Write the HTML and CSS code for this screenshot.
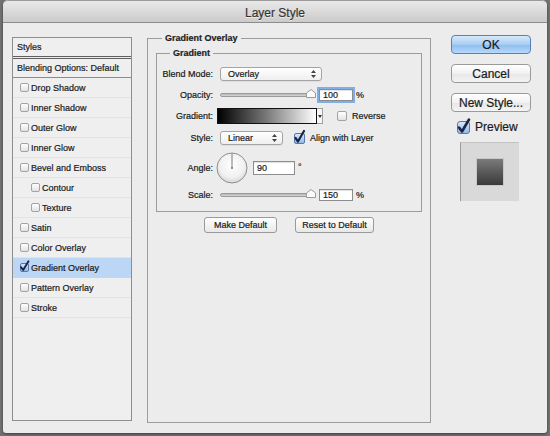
FILE: index.html
```html
<!DOCTYPE html>
<html>
<head>
<meta charset="utf-8">
<title>Layer Style</title>
<link rel="stylesheet" href="styles.css">
</head>
<body>
<div class="window">
  <div class="titlebar">Layer Style</div>
  <div class="content">
    <div class="styles-list">
      <div class="list-head">Styles</div>
      <div class="list-blend">Blending Options: Default</div>
      <div class="item"><span class="cb"></span>Drop Shadow</div>
      <div class="item"><span class="cb"></span>Inner Shadow</div>
      <div class="item"><span class="cb"></span>Outer Glow</div>
      <div class="item"><span class="cb"></span>Inner Glow</div>
      <div class="item"><span class="cb"></span>Bevel and Emboss</div>
      <div class="item sub"><span class="cb"></span>Contour</div>
      <div class="item sub"><span class="cb"></span>Texture</div>
      <div class="item"><span class="cb"></span>Satin</div>
      <div class="item"><span class="cb"></span>Color Overlay</div>
      <div class="item selected"><span class="cb on"><svg class="check" width="12" height="14" viewBox="0 0 12 14"><path d="M2 8.2 L4.2 11 L9.5 2.2" fill="none" stroke="#1c2547" stroke-width="1.9" stroke-linecap="round" stroke-linejoin="round"/></svg></span>Gradient Overlay</div>
      <div class="item"><span class="cb"></span>Pattern Overlay</div>
      <div class="item"><span class="cb"></span>Stroke</div>
    </div>

    <div class="middle">
      <fieldset class="group outer">
        <legend>Gradient Overlay</legend>
        <fieldset class="group inner">
          <legend>Gradient</legend>
          <div class="form">
            <span class="lbl">Blend Mode:</span>
            <div class="ctl">
              <div class="select blend"><span>Overlay</span><svg width="5" height="8" viewBox="0 0 5 8"><path d="M0 3 L2.5 0 L5 3 Z M0 5 L2.5 8 L5 5 Z" fill="#444"/></svg></div>
            </div>

            <span class="lbl">Opacity:</span>
            <div class="ctl">
              <div class="track"></div>
              <svg class="thumb" width="10" height="9" viewBox="0 0 10 9"><path d="M0.5 4 L5 0.5 L9.5 4 L9.5 8.5 L0.5 8.5 Z" fill="#fbfbfb" stroke="#9a9a9a"/></svg>
              <div class="num focus">100</div><span class="unit">%</span>
            </div>

            <span class="lbl">Gradient:</span>
            <div class="ctl">
              <div class="gradbar"></div>
              <div class="gradarrow"><svg width="4" height="3" viewBox="0 0 4 3"><path d="M0 0 L4 0 L2 3 Z" fill="#333"/></svg></div>
              <span class="cb mid rev"></span><span class="ctext">Reverse</span>
            </div>

            <span class="lbl">Style:</span>
            <div class="ctl">
              <div class="select style"><span>Linear</span><svg width="5" height="8" viewBox="0 0 5 8"><path d="M0 3 L2.5 0 L5 3 Z M0 5 L2.5 8 L5 5 Z" fill="#444"/></svg></div>
              <span class="cb big on align"><svg class="check" width="14" height="16" viewBox="0 0 14 16"><path d="M2.5 9 L5 12.5 L11 2" fill="none" stroke="#1c2547" stroke-width="2.2" stroke-linecap="round" stroke-linejoin="round"/></svg></span><span class="ctext">Align with Layer</span>
            </div>

            <span class="lbl">Angle:</span>
            <div class="ctl">
              <svg class="dial" width="32" height="32" viewBox="0 0 32 32">
                <defs>
                  <radialGradient id="dg" cx="50%" cy="40%" r="60%">
                    <stop offset="0" stop-color="#ffffff"/>
                    <stop offset="0.7" stop-color="#f0f0f0"/>
                    <stop offset="1" stop-color="#d6d6d6"/>
                  </radialGradient>
                </defs>
                <circle cx="16" cy="16" r="15" fill="url(#dg)" stroke="#8e8e8e" stroke-width="1"/>
                <line x1="16" y1="16" x2="16" y2="1.5" stroke="#7a7a7a" stroke-width="1"/>
                <circle cx="16" cy="16" r="1" fill="#777"/>
              </svg>
              <div class="num angle">90</div><span class="deg">°</span>
            </div>

            <span class="lbl">Scale:</span>
            <div class="ctl">
              <div class="track"></div>
              <svg class="thumb" width="10" height="9" viewBox="0 0 10 9"><path d="M0.5 4 L5 0.5 L9.5 4 L9.5 8.5 L0.5 8.5 Z" fill="#fbfbfb" stroke="#9a9a9a"/></svg>
              <div class="num">150</div><span class="unit">%</span>
            </div>
          </div>
        </fieldset>
        <div class="default-buttons">
          <button class="small make">Make Default</button>
          <button class="small reset">Reset to Default</button>
        </div>
      </fieldset>
    </div>

    <div class="actions">
      <button class="btn primary">OK</button>
      <button class="btn">Cancel</button>
      <button class="btn">New Style...</button>
      <div class="preview-row">
        <span class="cb large on"><svg class="check" width="16" height="18" viewBox="0 0 16 18"><path d="M3 10.5 L6 14.5 L13 2.5" fill="none" stroke="#1c2547" stroke-width="2.6" stroke-linecap="round" stroke-linejoin="round"/></svg></span>
        <span class="preview-label">Preview</span>
      </div>
      <div class="preview-box"><div class="swatch"></div></div>
    </div>
  </div>
</div>
</body>
</html>
```

FILE: styles.css
```css
* { box-sizing: border-box; }

html, body {
  margin: 0;
  padding: 0;
}

body {
  width: 550px;
  height: 436px;
  padding: 0 3px 3px 3px;
  background: #737373;
  font-family: "Liberation Sans", Arial, sans-serif;
  color: #1a1a1a;
  -webkit-text-stroke: 0.2px currentColor;
  overflow: hidden;
}

.window {
  width: 544px;
  height: 433px;
  background: #ececec;
  border-radius: 5px 5px 3px 3px;
  display: flex;
  flex-direction: column;
  overflow: hidden;
  box-shadow: 0 1px 3px rgba(0, 0, 0, 0.5);
}

.titlebar {
  flex: none;
  height: 23px;
  padding-top: 3px;
  background: linear-gradient(#e9e9e9, #cbcbcb);
  border-top: 1px solid #9a9a9a;
  border-bottom: 1px solid #8c8c8c;
  border-radius: 5px 5px 0 0;
  text-align: center;
  font-size: 12px;
  line-height: 18px;
  color: #353535;
  text-shadow: 0 1px 0 rgba(255, 255, 255, 0.6);
}

.content {
  flex: 1;
  display: flex;
  align-items: flex-start;
  padding: 9px 16px 0 9px;
}

/* ---------- Left styles list ---------- */
.styles-list {
  flex: none;
  width: 120px;
  height: 384px;
  margin-top: 5px;
  margin-right: 15px;
  border: 1px solid #8e8e8e;
  background: #efefef;
  font-size: 9px;
}

.list-head {
  height: 21px;
  line-height: 18px;
  padding-left: 4px;
  border-bottom: 3px double #5e5e5e;
}

.list-blend {
  height: 19px;
  line-height: 18px;
  padding-left: 4px;
  border-bottom: 1px solid #8a8a8a;
}

.item {
  height: 20px;
  display: flex;
  align-items: center;
  padding-left: 7px;
  border-bottom: 1px solid #e3e3e3;
}

.item.sub {
  padding-left: 18px;
}

.item.selected {
  background: #bcd6f6;
  border-bottom-color: #bcd6f6;
}

/* ---------- Checkboxes ---------- */
.cb {
  flex: none;
  position: relative;
  display: inline-block;
  width: 9px;
  height: 9px;
  margin-right: 2px;
  border: 1px solid #a3a3a3;
  border-radius: 2px;
  background: linear-gradient(#ffffff, #e2e2e2);
}

.cb.on {
  border-color: #5877a8;
  background: linear-gradient(#d9e8f8, #8fbbec);
}

.cb .check {
  position: absolute;
  left: -2px;
  bottom: -2px;
  overflow: visible;
}

.cb.mid {
  width: 10px;
  height: 10px;
}

.cb.big {
  width: 11px;
  height: 11px;
}

.cb.large {
  width: 13px;
  height: 13px;
  border-radius: 3px;
}

/* ---------- Middle panel ---------- */
.middle {
  flex: none;
  width: 284px;
  margin-right: 20px;
}

.group {
  margin: 0;
  min-width: 0;
  border: 1px solid #9c9c9c;
}

.group legend {
  font-size: 9px;
  font-weight: bold;
  line-height: 12px;
  padding: 0 3px;
  color: #222;
}

.outer {
  height: 391px;
  padding: 3px 8px 0 8px;
}

.outer > legend {
  margin-left: 6px;
}

.inner {
  padding: 5px 0 8px 0;
}

.inner > legend {
  margin-left: 13px;
}

.form {
  display: grid;
  grid-template-columns: 56px 1fr;
  grid-template-rows: 20px 21px 22px 22px 38px 16px;
  column-gap: 7px;
  align-items: center;
  font-size: 9px;
}

.lbl {
  text-align: right;
}

.ctl {
  display: flex;
  align-items: center;
}

.select {
  display: flex;
  align-items: center;
  justify-content: space-between;
  height: 14px;
  padding: 0 5px 0 7px;
  border: 1px solid #a4a4a4;
  border-radius: 3px;
  background: linear-gradient(#ffffff, #efefef);
  box-shadow: 0 1px 0 rgba(0, 0, 0, 0.06);
}

.select.blend {
  width: 102px;
}

.select.style {
  width: 63px;
}

.track {
  width: 91px;
  height: 4px;
  border-radius: 2px;
  border: 1px solid #9b9b9b;
  background: linear-gradient(#b5b5b5, #d8d8d8);
}

.thumb {
  flex: none;
  margin-left: -5px;
  margin-top: -3px;
}

.num {
  width: 34px;
  height: 12px;
  margin-left: 3px;
  padding-left: 3px;
  line-height: 11px;
  border: 1px solid #8d8d8d;
  background: #fff;
  box-shadow: inset 0 1px 1px rgba(0, 0, 0, 0.12);
}

.num.focus {
  box-shadow: 0 0 0 2px #80aee8, inset 0 1px 1px rgba(0, 0, 0, 0.12);
}

.num.angle {
  width: 42px;
  height: 14px;
  line-height: 13px;
  margin-left: 5px;
}

.unit {
  margin-left: 3px;
}

.deg {
  margin-left: 3px;
  align-self: flex-start;
  margin-top: 10px;
}

.gradbar {
  width: 100px;
  height: 16px;
  margin-left: -3px;
  border: 1px solid #111;
  background: linear-gradient(to right, #000000, #7a7a7a 50%, #ffffff);
}

.gradarrow {
  width: 6px;
  height: 16px;
  display: flex;
  align-items: center;
  justify-content: center;
  border: 1px solid #a0a0a0;
  border-left: none;
  background: #f6f6f6;
}

.cb.rev {
  margin-left: 14px;
}

.cb.align {
  margin-left: 11px;
}

.ctext {
  margin-left: 3px;
}

.dial {
  flex: none;
  margin-left: -4px;
}

.default-buttons {
  display: flex;
  justify-content: center;
  gap: 18px;
  margin-top: 5px;
}

.small {
  height: 16px;
  padding: 0;
  font-family: "Liberation Sans", Arial, sans-serif;
  font-size: 9px;
  color: #1a1a1a;
  -webkit-text-stroke: 0.2px currentColor;
  border: 1px solid #9a9a9a;
  border-radius: 3px;
  background: linear-gradient(#ffffff, #e8e8e8);
}

.small.make {
  width: 73px;
}

.small.reset {
  width: 79px;
}

/* ---------- Right actions ---------- */
.actions {
  flex: none;
  width: 80px;
  margin-top: 3px;
  display: flex;
  flex-direction: column;
}

.btn {
  width: 80px;
  height: 19px;
  margin-bottom: 10px;
  padding: 0;
  font-family: "Liberation Sans", Arial, sans-serif;
  font-size: 12px;
  color: #1a1a1a;
  -webkit-text-stroke: 0.2px currentColor;
  border: 1px solid #9a9a9a;
  border-radius: 4px;
  background: linear-gradient(#ffffff, #f1f1f1 50%, #e6e6e6 51%, #f4f4f4);
}

.btn.primary {
  border-color: #5a7fb4;
  background: linear-gradient(#d7eafc, #a7cdf3 50%, #8cbcee 51%, #b6dafc);
}

.preview-row {
  display: flex;
  align-items: center;
  height: 14px;
  margin-top: -2px;
  padding-left: 6px;
}

.preview-label {
  margin-left: 3px;
  font-size: 12px;
}

.preview-box {
  width: 59px;
  height: 59px;
  margin-top: 8px;
  margin-left: 9px;
  display: flex;
  align-items: center;
  justify-content: center;
  background: #d9d9d9;
  border-left: 1px solid #9b9b9b;
  border-top: 1px solid #c4c4c4;
}

.swatch {
  width: 28px;
  height: 28px;
  background: linear-gradient(#7a7a7a, #3a3a3a);
  border: 1px solid #c8c8c8;
}
```
